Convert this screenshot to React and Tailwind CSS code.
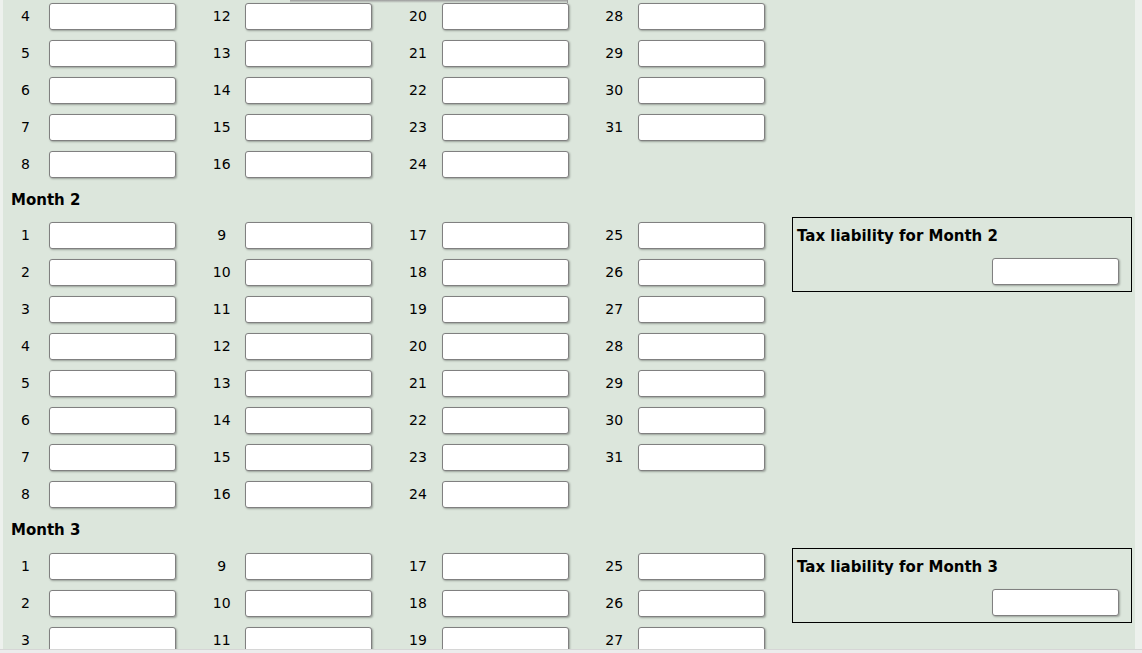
import React from "react";

const FONT = { fontFamily: '"DejaVu Sans", Verdana, sans-serif' };

// Day numbers laid out column by column: 1-8, 9-16, 17-24, 25-31
const COLUMNS = [
  [1, 2, 3, 4, 5, 6, 7, 8],
  [9, 10, 11, 12, 13, 14, 15, 16],
  [17, 18, 19, 20, 21, 22, 23, 24],
  [25, 26, 27, 28, 29, 30, 31],
];

function AmountInput() {
  return (
    <input
      type="text"
      className="w-[127px] h-[27px] bg-white border border-[#808080] rounded-[3px] shadow-[1px_1px_2px_rgba(0,0,0,0.3)] outline-none"
    />
  );
}

function DayCell({ day }) {
  return (
    <div className="h-[37px] flex items-center">
      <span className="w-[45px] text-center text-[14px] text-black">{day}</span>
      <div className="ml-px">
        <AmountInput />
      </div>
    </div>
  );
}

function MonthBlock({ month }) {
  return (
    <div>
      <div className="h-[34.5px] flex items-center pl-[8px] text-[15px] font-bold text-black">
        Month {month}
      </div>
      <div className="flex">
        {COLUMNS.map((col, i) => (
          <div key={i} className="w-[196.25px] flex flex-col">
            {col.map((d) => (
              <DayCell key={d} day={d} />
            ))}
          </div>
        ))}
        <div className="ml-[4px]">
          <div className="w-[340px] h-[75px] border border-black flex flex-col">
            <div className="h-[37px] flex items-center pl-[4px] text-[15px] font-bold text-black">
              Tax liability for Month {month}
            </div>
            <div className="flex justify-end pr-[12px] mt-[3px]">
              <AmountInput />
            </div>
          </div>
        </div>
      </div>
    </div>
  );
}

export default function App() {
  return (
    <div
      className="relative w-[1142px] h-[653px] overflow-hidden bg-[#edf1ed] flex flex-col"
      style={FONT}
    >
      <div className="h-[649px] overflow-hidden">
        <div className="ml-[3px] w-[1132px] bg-[#dce6dc] -mt-[148px] pb-[40px]">
          <MonthBlock month={1} />
          <MonthBlock month={2} />
          <MonthBlock month={3} />
        </div>
      </div>
      {/* horizontal scrollbar edge */}
      <div className="h-[4px] bg-[#ececec] border-t border-[#d6d6d6]" />
      {/* shadow cast by the floating toolbar above */}
      <div className="absolute top-0 left-[290px] w-[278px] h-[3px] bg-gradient-to-b from-[#9a9a9a] to-transparent border-r border-[#9a9a9a]" />
    </div>
  );
}
